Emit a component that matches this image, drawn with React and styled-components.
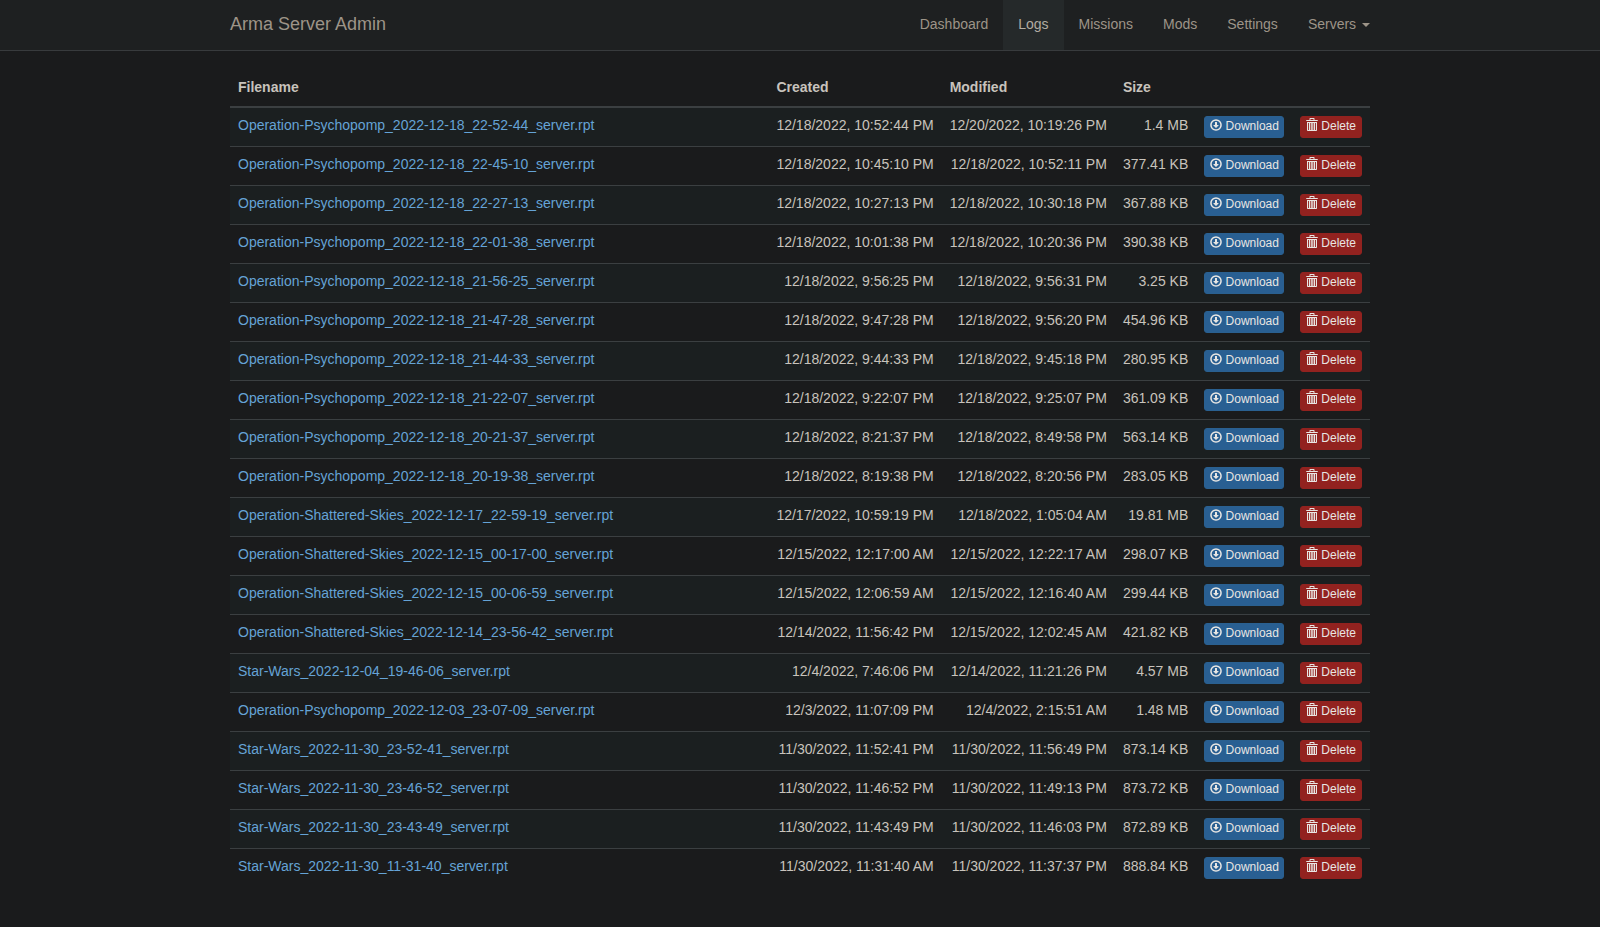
import React from 'react';
import styled, { createGlobalStyle } from 'styled-components';

const links = ['Dashboard', 'Logs', 'Missions', 'Mods', 'Settings'];

const logs = [
  ['Operation-Psychopomp_2022-12-18_22-52-44_server.rpt', '12/18/2022, 10:52:44 PM', '12/20/2022, 10:19:26 PM', '1.4 MB'],
  ['Operation-Psychopomp_2022-12-18_22-45-10_server.rpt', '12/18/2022, 10:45:10 PM', '12/18/2022, 10:52:11 PM', '377.41 KB'],
  ['Operation-Psychopomp_2022-12-18_22-27-13_server.rpt', '12/18/2022, 10:27:13 PM', '12/18/2022, 10:30:18 PM', '367.88 KB'],
  ['Operation-Psychopomp_2022-12-18_22-01-38_server.rpt', '12/18/2022, 10:01:38 PM', '12/18/2022, 10:20:36 PM', '390.38 KB'],
  ['Operation-Psychopomp_2022-12-18_21-56-25_server.rpt', '12/18/2022, 9:56:25 PM', '12/18/2022, 9:56:31 PM', '3.25 KB'],
  ['Operation-Psychopomp_2022-12-18_21-47-28_server.rpt', '12/18/2022, 9:47:28 PM', '12/18/2022, 9:56:20 PM', '454.96 KB'],
  ['Operation-Psychopomp_2022-12-18_21-44-33_server.rpt', '12/18/2022, 9:44:33 PM', '12/18/2022, 9:45:18 PM', '280.95 KB'],
  ['Operation-Psychopomp_2022-12-18_21-22-07_server.rpt', '12/18/2022, 9:22:07 PM', '12/18/2022, 9:25:07 PM', '361.09 KB'],
  ['Operation-Psychopomp_2022-12-18_20-21-37_server.rpt', '12/18/2022, 8:21:37 PM', '12/18/2022, 8:49:58 PM', '563.14 KB'],
  ['Operation-Psychopomp_2022-12-18_20-19-38_server.rpt', '12/18/2022, 8:19:38 PM', '12/18/2022, 8:20:56 PM', '283.05 KB'],
  ['Operation-Shattered-Skies_2022-12-17_22-59-19_server.rpt', '12/17/2022, 10:59:19 PM', '12/18/2022, 1:05:04 AM', '19.81 MB'],
  ['Operation-Shattered-Skies_2022-12-15_00-17-00_server.rpt', '12/15/2022, 12:17:00 AM', '12/15/2022, 12:22:17 AM', '298.07 KB'],
  ['Operation-Shattered-Skies_2022-12-15_00-06-59_server.rpt', '12/15/2022, 12:06:59 AM', '12/15/2022, 12:16:40 AM', '299.44 KB'],
  ['Operation-Shattered-Skies_2022-12-14_23-56-42_server.rpt', '12/14/2022, 11:56:42 PM', '12/15/2022, 12:02:45 AM', '421.82 KB'],
  ['Star-Wars_2022-12-04_19-46-06_server.rpt', '12/4/2022, 7:46:06 PM', '12/14/2022, 11:21:26 PM', '4.57 MB'],
  ['Operation-Psychopomp_2022-12-03_23-07-09_server.rpt', '12/3/2022, 11:07:09 PM', '12/4/2022, 2:15:51 AM', '1.48 MB'],
  ['Star-Wars_2022-11-30_23-52-41_server.rpt', '11/30/2022, 11:52:41 PM', '11/30/2022, 11:56:49 PM', '873.14 KB'],
  ['Star-Wars_2022-11-30_23-46-52_server.rpt', '11/30/2022, 11:46:52 PM', '11/30/2022, 11:49:13 PM', '873.72 KB'],
  ['Star-Wars_2022-11-30_23-43-49_server.rpt', '11/30/2022, 11:43:49 PM', '11/30/2022, 11:46:03 PM', '872.89 KB'],
  ['Star-Wars_2022-11-30_11-31-40_server.rpt', '11/30/2022, 11:31:40 AM', '11/30/2022, 11:37:37 PM', '888.84 KB'],
];

const DownloadIcon = () => (
  <Icon viewBox="0 0 1200 1200" aria-hidden="true">
    <g transform="matrix(1 0 0 -1 0 1200)">
      <path
        fillRule="evenodd"
        d="M600 1177q117 0 224 -45.5t184.5 -123t123 -184.5t45.5 -224t-45.5 -224t-123 -184.5t-184.5 -123t-224 -45.5t-224 45.5t-184.5 123t-123 184.5t-45.5 224t45.5 224t123 184.5t184.5 123t224 45.5zM600 1027q-116 0 -214.5 -57t-155.5 -155.5t-57 -214.5t57 -214.5t155.5 -155.5t214.5 -57t214.5 57t155.5 155.5t57 214.5t-57 214.5t-155.5 155.5t-214.5 57z"
      />
      <path d="M525 900h150q10 0 17.5 -7.5t7.5 -17.5v-275h137q21 0 26 -11.5t-8 -27.5l-223 -244q-13 -16 -32 -16t-32 16l-223 244q-13 16 -8 27.5t26 11.5h137v275q0 10 7.5 17.5t17.5 7.5z" />
    </g>
  </Icon>
);

// the handle rises one unit above the icon box
const TrashIcon = () => (
  <Icon viewBox="0 0 12 12" aria-hidden="true">
    <path
      fillRule="evenodd"
      d="M3.500 1V-.4Q3.500 -1 4.100 -1h3.800Q8.500 -1 8.500 -.4V1H11q1 0 1 1H0q0-1 1-1zM4.500 1h3V0h-3zM1 3h10v8.200q0 .8-.8.800H1.800q-.8 0-.8-.8zM2 4v7h.9V4zM4.300 4v7h.9V4zM6.700 4v7h.9V4zM9.100 4v7h.9V4z"
    />
  </Icon>
);

// -------------------------------------------------

export default function App() {
  return (
    <>
      <GlobalStyle />
      <Navbar>
        <NavContainer>
          <Brand href="#">Arma Server Admin</Brand>
          <NavList>
            {links.map((link) => (
              <li key={link}>
                <NavLink href="#" $active={link === 'Logs'}>
                  {link}
                </NavLink>
              </li>
            ))}
            <li>
              <NavLink href="#" aria-haspopup="true">
                Servers <Caret />
              </NavLink>
            </li>
          </NavList>
        </NavContainer>
      </Navbar>
      <Container>
        <Table>
          <thead>
            <tr>
              <HeadCell $wide>Filename</HeadCell>
              <HeadCell>Created</HeadCell>
              <HeadCell>Modified</HeadCell>
              <HeadCell>Size</HeadCell>
              <HeadCell as="td" />
              <HeadCell as="td" />
            </tr>
          </thead>
          <tbody>
            {logs.map(([name, created, modified, size]) => (
              <Row key={name}>
                <Cell>
                  <FileLink href="#">{name}</FileLink>
                </Cell>
                <Cell $right>{created}</Cell>
                <Cell $right>{modified}</Cell>
                <Cell $right>{size}</Cell>
                <ActionCell>
                  <DownloadLink href="#">
                    <DownloadIcon /> Download
                  </DownloadLink>
                </ActionCell>
                <ActionCell>
                  <DeleteButton type="button">
                    <TrashIcon /> Delete
                  </DeleteButton>
                </ActionCell>
              </Row>
            ))}
          </tbody>
        </Table>
      </Container>
    </>
  );
}

// STYLING ----------------------------------------
const GlobalStyle = createGlobalStyle`
  * {
    box-sizing: border-box;
  }

  body {
    margin: 0;
    background: #1a1b1c;
    color: #c8c3bc;
    font-family: 'Liberation Sans', Arial, sans-serif;
    font-size: 14px;
    line-height: 20px;
  }
`;

const Navbar = styled.nav`
  margin-bottom: 20px;
  background: #1e2021;
  border-bottom: 1px solid #383b3d;
`;

const Container = styled.main`
  max-width: 1170px;
  margin: 0 auto;
  padding: 0 15px;
`;

const NavContainer = styled(Container).attrs({ as: 'div' })`
  display: flex;
  justify-content: space-between;
`;

const Brand = styled.a`
  padding: 14px 0 16px;
  color: #9d9488;
  font-size: 18px;
  text-decoration: none;
`;

const NavList = styled.ul`
  display: flex;
  margin: 0 -15px 0 0;
  padding: 0;
  list-style: none;
`;

const NavLink = styled.a`
  display: block;
  padding: 14px 15px 16px;
  background: ${(props) => (props.$active ? '#25292a' : 'transparent')};
  color: ${(props) => (props.$active ? '#b2aca2' : '#9d9488')};
  text-decoration: none;
`;

const Caret = styled.span`
  display: inline-block;
  margin-left: 2px;
  vertical-align: middle;
  border-top: 4px solid;
  border-right: 4px solid transparent;
  border-left: 4px solid transparent;
`;

const Table = styled.table`
  width: 100%;
  margin-bottom: 20px;
  border-collapse: separate;
  border-spacing: 0;
`;

const HeadCell = styled.th`
  width: ${(props) => (props.$wide ? '100%' : 'auto')};
  padding: 6px 8px 9px;
  border-bottom: 2px solid #3b3f41;
  text-align: left;
`;

const Cell = styled.td`
  padding: 7px 8px 9px;
  border-top: 1px solid #3b3f41;
  text-align: ${(props) => (props.$right ? 'right' : 'left')};
  vertical-align: top;
  white-space: nowrap;
`;

const ActionCell = styled(Cell)`
  padding: 8px;
`;

const Row = styled.tr`
  &:nth-child(odd) {
    background: #1b1f20;
  }

  &:first-child ${Cell} {
    border-top: 0;
  }
`;

const FileLink = styled.a`
  color: #65a3d6;
  text-decoration: none;
`;

const DownloadLink = styled.a`
  display: block;
  padding: 0 4px 2px 5px;
  background: #295f92;
  border: 1px solid #2a6090;
  border-radius: 3px;
  color: #e8e6e3;
  font-family: inherit;
  font-size: 12px;
  line-height: 18px;
  text-decoration: none;
  cursor: pointer;
`;

const DeleteButton = styled(DownloadLink).attrs({ as: 'button' })`
  padding: 0 5px 2px;
  background: #92221f;
  border-color: #92221f;
`;

const Icon = styled.svg`
  width: 12px;
  height: 12px;
  overflow: visible;
  fill: currentColor;
  vertical-align: -1px;
`;
